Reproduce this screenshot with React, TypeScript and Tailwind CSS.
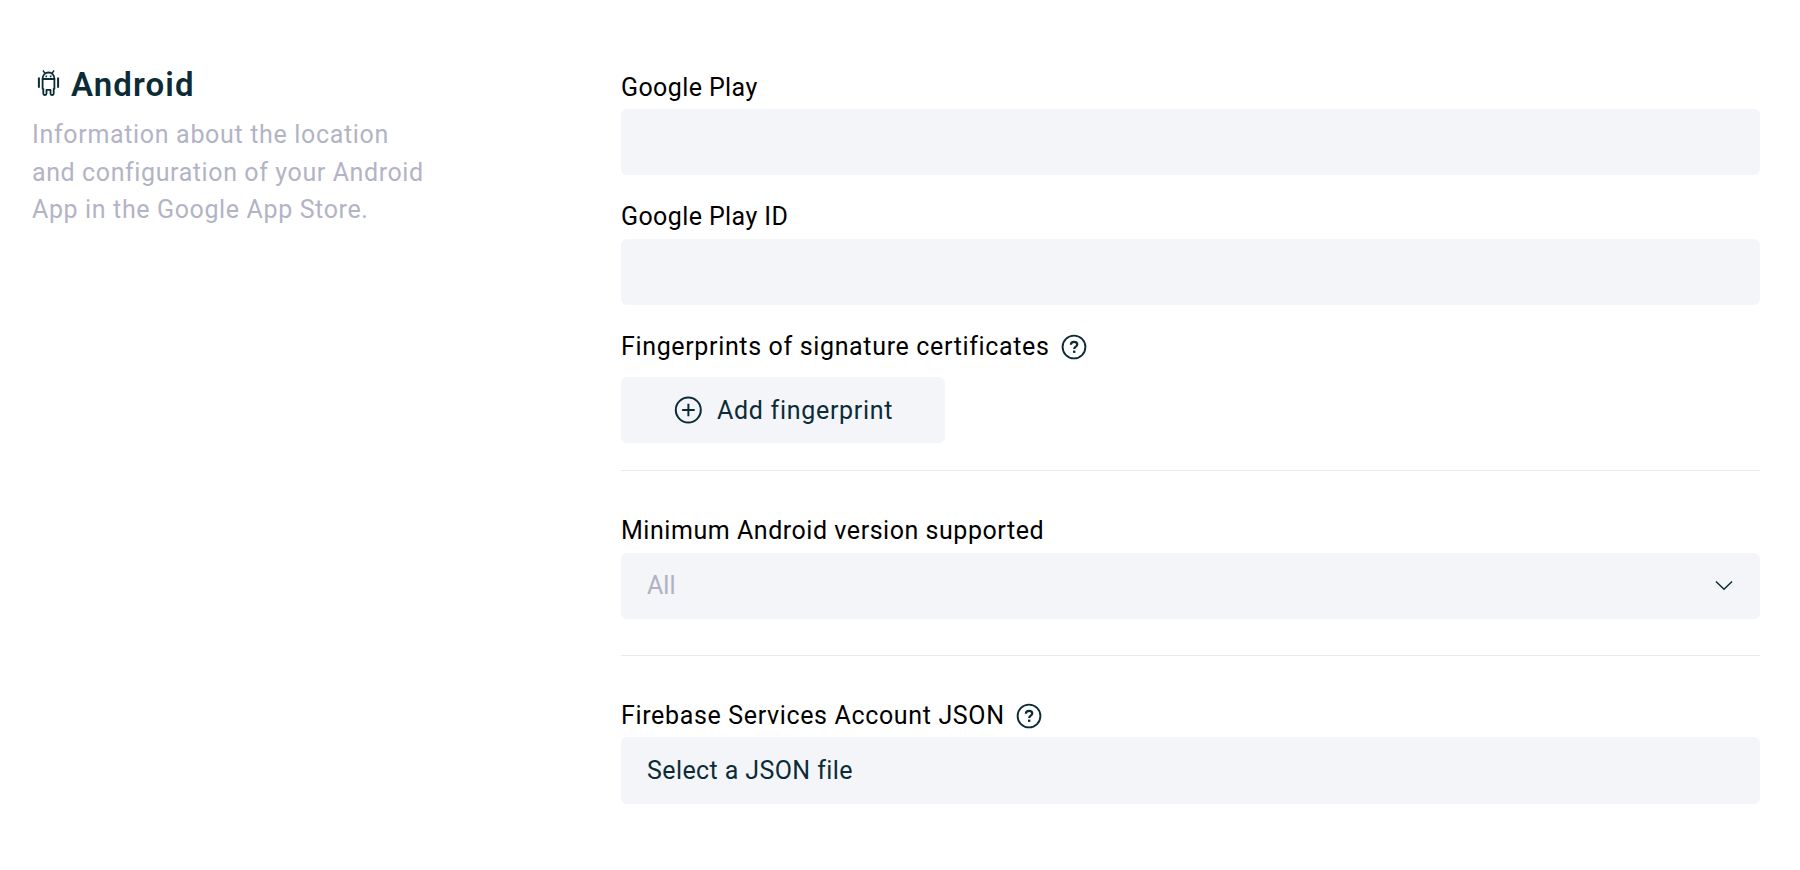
import type { ReactNode } from 'react';
import clsx from 'clsx';

function AndroidIcon() {
  return (
    <svg width="24" height="28" viewBox="0 0 24 28" fill="none" stroke="currentColor" strokeWidth="1.8" strokeLinejoin="round" className="shrink-0">
      <path d="M7 .5 8.8 3.2M18 .5 16.2 3.2" strokeWidth="1.4" />
      <path d="M6.6 9C6.6 5 9 2.5 12.5 2.5S18.4 5 18.4 9Z" />
      <path d="M6.6 9h11.8v9.8h-.7v4.8a1.4 1.4 0 0 1-1.4 1.4h-.4a1.4 1.4 0 0 1-1.4-1.4v-3.7h-4v3.7a1.4 1.4 0 0 1-1.4 1.4h-.4a1.4 1.4 0 0 1-1.4-1.4v-4.8h-.7Z" />
      <path d="M2.9 7.5v10.2M22.1 7.5v10.2" strokeWidth="2" />
      <path d="M10.3 5.4v1.8M14.7 5.4v1.8" strokeWidth="1.6" />
    </svg>
  );
}

function HelpIcon() {
  return (
    <svg width="26" height="26" viewBox="0 0 26 26" fill="none" stroke="currentColor" strokeWidth="1.9" className="shrink-0 text-[#0b2c37]">
      <circle cx="13" cy="13" r="11.4" />
      <path d="M9.9 10.8c0-1.9 1.3-3 3.2-3s3.2 1.1 3.2 2.7c0 2.2-3.1 2.2-3.1 4.5" strokeWidth="2.2" />
      <path d="M13.2 16.6v2.3" strokeWidth="2.4" />
    </svg>
  );
}

function PlusIcon() {
  return (
    <svg width="28" height="28" viewBox="0 0 28 28" fill="none" stroke="currentColor" strokeWidth="2" className="shrink-0">
      <circle cx="14.3" cy="14" r="12.5" />
      <path d="M14.4 7.7v12.6M8.1 14h12.6" />
    </svg>
  );
}

function Label({ children, className, help }: { children: ReactNode; className?: string; help?: boolean }) {
  return (
    <div className={clsx('flex items-start gap-[11.5px] text-[25px] leading-[36px] whitespace-nowrap text-black', className)}>
      <span>{children}</span>
      {help && <span className="pt-[5px]"><HelpIcon /></span>}
    </div>
  );
}

export default function App() {
  return (
    <main className="flex h-[870px] w-[1800px] bg-white font-['Roboto',sans-serif] text-[#0b2c37]">
      <aside className="w-[621px] shrink-0 pt-[62px] pl-8">
        <h2 className="flex h-[44px] items-center gap-[11px] pl-1">
          <AndroidIcon />
          <span className="pt-px text-[33px] leading-[42px] font-semibold tracking-[1.1px]">Android</span>
        </h2>
        <p className="mt-[10px] text-[25px] leading-[37.5px] whitespace-nowrap text-[#b2b4c5]">
          <span className="block tracking-[0.67px]">Information about the location</span>
          <span className="block tracking-[0.6px]">and configuration of your Android</span>
          <span className="block tracking-[0.63px]">App in the Google App Store.</span>
        </p>
      </aside>

      <section className="w-[1139px] pt-[70px]">
        <Label className="h-[39px] tracking-[0.4px]">Google Play</Label>
        <input className="block h-[66px] w-full rounded-md bg-[#f3f5f9] px-[26px] outline-none" />

        <Label className="mt-6 h-[40px] tracking-[0.4px]">Google Play ID</Label>
        <input className="block h-[66px] w-full rounded-md bg-[#f3f5f9] px-[26px] outline-none" />

        <Label className="mt-6 h-[48px] tracking-[0.65px]" help>Fingerprints of signature certificates</Label>
        <button className="flex h-[66px] w-[324px] items-center gap-[15px] rounded-md bg-[#f3f5f9] pl-[53px] text-[25px] tracking-[0.7px] whitespace-nowrap">
          <PlusIcon />
          <span className="pt-[2px]">Add fingerprint</span>
        </button>

        <hr className="mt-[27px] border-t border-[#e9eaf1]" />

        <Label className="mt-[42px] h-[40px] tracking-[0.54px]">Minimum Android version supported</Label>
        <button className="flex h-[66px] w-full items-center justify-between rounded-md bg-[#f3f5f9] pr-[26px] pl-[26px] text-[25px]">
          <span className="text-[#b2b0c3]">All</span>
          <svg width="20" height="12" viewBox="0 0 20 12" fill="none" stroke="currentColor" strokeWidth="1.5">
            <path d="m2 1.5 8 7.8L18 1.5" />
          </svg>
        </button>

        <hr className="mt-[36px] border-t border-[#e9eaf1]" />

        <Label className="mt-[42px] h-[39px] tracking-[0.65px]" help>Firebase Services Account JSON</Label>
        <button className="flex h-[67px] w-full items-center rounded-md bg-[#f3f5f9] pl-[26px] text-[25px] tracking-[0.4px]">
          Select a JSON file
        </button>
      </section>
    </main>
  );
}
